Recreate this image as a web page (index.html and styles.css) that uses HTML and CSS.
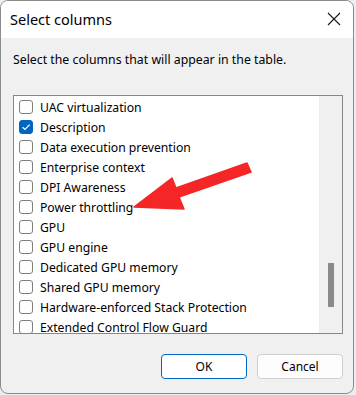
FILE: index.html
```html
<!DOCTYPE html>
<html lang="en">
<head>
  <meta charset="UTF-8">
  <title>Select columns</title>
  <link rel="stylesheet" href="styles.css">
</head>
<body>

<div class="dialog">
  <!-- Title bar -->
  <div class="titlebar">
    <span class="title">Select columns</span>
    <svg class="close" width="14" height="14" viewBox="0 0 14 14">
      <path d="M1 1 L13 13 M13 1 L1 13" stroke="#1a1a1a" stroke-width="1.1" fill="none"/>
    </svg>
  </div>

  <div class="content">
    <p class="hint">Select the columns that will appear in the table.</p>

    <div class="listbox">
      <ul class="items">
        <li><span class="box"></span>UAC virtualization</li>
        <li><span class="box checked"><svg width="14" height="14" viewBox="0 0 14 14"><path d="M3.6 7.2 L6 9.5 L10.6 4.6" stroke="#fff" stroke-width="1.2" fill="none"/></svg></span>Description</li>
        <li><span class="box"></span>Data execution prevention</li>
        <li><span class="box"></span>Enterprise context</li>
        <li><span class="box"></span>DPI Awareness</li>
        <li><span class="box"></span>Power throttling</li>
        <li><span class="box"></span>GPU</li>
        <li><span class="box"></span>GPU engine</li>
        <li><span class="box"></span>Dedicated GPU memory</li>
        <li><span class="box"></span>Shared GPU memory</li>
        <li><span class="box"></span>Hardware-enforced Stack Protection</li>
        <li><span class="box"></span>Extended Control Flow Guard</li>
      </ul>
      <div class="scrollbar"><div class="thumb"></div></div>
    </div>

    <div class="buttons">
      <button class="btn primary">OK</button>
      <button class="btn">Cancel</button>
    </div>
  </div>

  <!-- annotation arrow -->
  <svg class="arrow" width="356" height="395" viewBox="0 0 356 395">
    <polygon points="134,207 172,178 176,188 247,163 251,172 179,197 184,209" fill="#f52626" stroke="#f52626" stroke-width="1.5" stroke-linejoin="round"/>
  </svg>
</div>

</body>
</html>
```

FILE: styles.css
```css
body {
  margin: 0;
  padding: 0;
  background-color: #e9eef3;
  font-family: 'Segoe UI', 'Noto Sans', sans-serif;
  color: #000;
}
.dialog {
  position: relative;
  width: 352px;
  height: 392px;
  border: 1px solid #8c8c8c;
  border-radius: 8px;
  background-color: #f0f0f0;
  overflow: hidden;
}
.titlebar {
  height: 37px;
  background-color: #fff;
  display: flex;
  align-items: center;
  justify-content: space-between;
  padding: 0 12px 0 9px;
}
.title {
  font-size: 14.5px;
  margin-top: -1px;
}
.close {
  display: block;
  margin-top: -1px;
}
.content {
  padding: 0 10px 0 12px;
}
.hint {
  margin: 14px 0 0 0;
  font-size: 12.3px;
  line-height: 16px;
}
.listbox {
  margin-top: 27px;
  height: 237px;
  border: 1px solid #828790;
  background-color: #fff;
  display: flex;
  overflow: hidden;
}
.items {
  flex: 1;
  list-style: none;
  margin: 0;
  padding: 1px 0 0 5px;
}
.items li {
  height: 20px;
  display: flex;
  align-items: center;
  font-size: 12.2px;
  white-space: nowrap;
}
.box {
  width: 12px;
  height: 12px;
  border: 1px solid #808080;
  border-radius: 3px;
  background-color: #fdfdfd;
  margin-right: 7px;
  flex-shrink: 0;
  position: relative;
}
.box.checked {
  background-color: #0067c0;
  border-color: #0067c0;
}
.box svg {
  position: absolute;
  left: -1px;
  top: -1px;
}
.scrollbar {
  width: 22px;
  border-left: 1px solid #e3ecf7;
  background-color: #f0f0f0;
}
.thumb {
  width: 6px;
  height: 44px;
  margin: 167px auto 0;
  background-color: #8a8a8a;
}
.buttons {
  display: flex;
  justify-content: flex-end;
  gap: 10px;
  margin-top: 20px;
}
.btn {
  width: 86px;
  height: 25px;
  font-family: 'Segoe UI', 'Noto Sans', sans-serif;
  font-size: 12px;
  color: #000;
  background-color: #fdfdfd;
  border: 1px solid #d0d0d0;
  border-radius: 4px;
  padding: 0;
}
.btn.primary {
  border-color: #0067c0;
  background-color: #fff;
}
.arrow {
  position: absolute;
  left: -1px;
  top: -1px;
  pointer-events: none;
}
```
